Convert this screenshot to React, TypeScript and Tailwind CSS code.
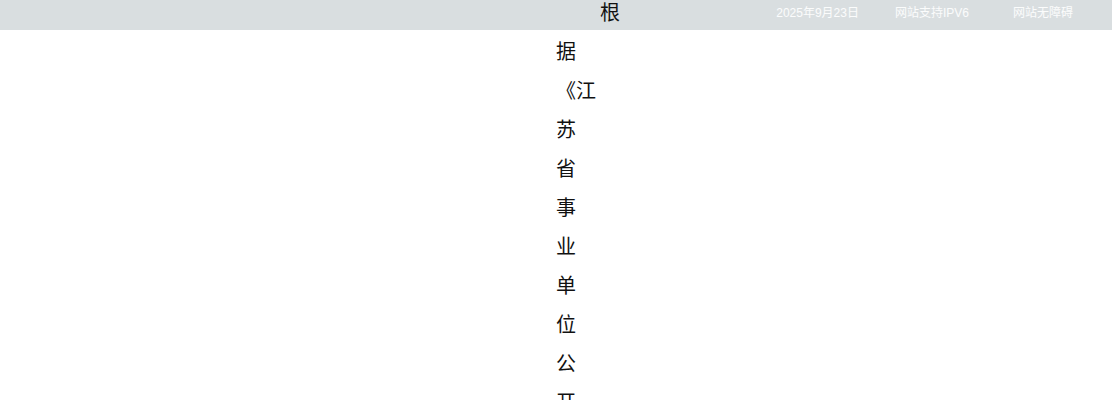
import React from "react";

const topLinks = [
  { label: "2025年9月23日", cls: "" },
  { label: "网站支持IPV6", cls: "ml-[36px]" },
  { label: "网站无障碍", cls: "ml-[44px]" },
];

const bodyText =
  "根据《江苏省事业单位公开招聘人员办法》和《江苏省事业单位公开招聘人员实施办法》等有关规定，经研究决定，面向社会公开招聘工作人员。";

function App() {
  return (
    <div className="w-full min-h-[400px] bg-white overflow-hidden">
      <div className="h-[30px] w-full bg-[#d9dee0] flex items-center justify-end pr-[39px] pb-[4px]">
        {topLinks.map((item) => (
          <span
            key={item.label}
            className={`${item.cls} text-[12px] leading-[16px] text-white/90 font-['Liberation_Sans','Noto_Sans_CJK_SC',sans-serif]`}
          >
            {item.label}
          </span>
        ))}
      </div>
      <div className="-mt-[38px] ml-[556px] w-[24px]">
        <p className="indent-[44px] text-[20px] leading-[39px] text-[#111] font-['Noto_Sans_CJK_SC',sans-serif]">
          {bodyText}
        </p>
      </div>
    </div>
  );
}

export default App;
